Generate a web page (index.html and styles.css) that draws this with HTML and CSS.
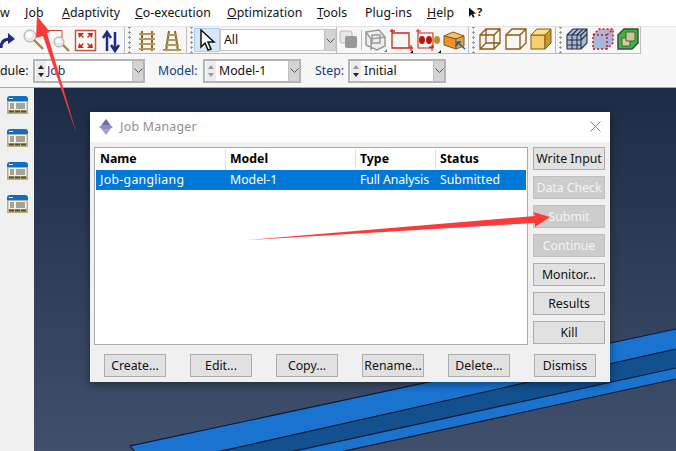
FILE: index.html
```html
<!DOCTYPE html>
<html lang="en">
<head>
<meta charset="utf-8">
<title>Job Manager</title>
<link rel="stylesheet" href="styles.css">
</head>
<body>
<div class="app">
  <nav class="menubar">
    <span class="menu">w</span>
    <span class="menu"><u>J</u>ob</span>
    <span class="menu"><u>A</u>daptivity</span>
    <span class="menu"><u>C</u>o-execution</span>
    <span class="menu"><u>O</u>ptimization</span>
    <span class="menu"><u>T</u>ools</span>
    <span class="menu">Plu<u>g</u>-ins</span>
    <span class="menu"><u>H</u>elp</span>
    <span class="help-icon"><svg width="8" height="14" viewBox="0 0 10 16"><path d="M0 1v12l3-3 2 4 2-1-2-4h4z" fill="#111"/></svg><span class="help-q">?</span></span>
  </nav>

  <div class="toolbar">
    <div class="toolgroup">
      <svg width="20" height="26" viewBox="0 0 20 26"><path d="M1 21c0-6 3-9 9-9" fill="none" stroke="#1f2a80" stroke-width="3"/><path d="M8 6l7 6-7 5z" fill="#1f2a80"/></svg>
      <svg width="26" height="26" viewBox="0 0 26 26"><circle cx="10" cy="9" r="6" fill="#e8e8e8" stroke="#aaa"/><circle cx="9" cy="8" r="3" fill="#fff"/><path d="M14 13l9 9" stroke="#a8843c" stroke-width="2.400"/></svg>
      <svg width="27" height="26" viewBox="0 0 27 26"><path d="M2 6V3.500h14V13" fill="none" stroke="#c8443a"/><circle cx="13" cy="15" r="5" fill="#e8e8e8" stroke="#aaa"/><circle cx="12" cy="14" r="2.500" fill="#fff"/><path d="M17 18l6 6" stroke="#a8843c" stroke-width="2.400"/></svg>
      <svg width="26" height="26" viewBox="0 0 26 26"><rect x="2.500" y="3.500" width="20" height="20" fill="#fff" stroke="#d0533f" stroke-width="1.500"/><path d="M5 6h6l-2 2 2 2-1 1-2-2-2 2zM20 6h-6l2 2-2 2 1 1 2-2 2 2zM5 21h6l-2-2 2-2-1-1-2 2-2-2zM20 21h-6l2-2-2-2 1-1 2 2 2-2z" fill="#c8300f"/></svg>
      <svg width="25" height="26" viewBox="0 0 25 26"><path d="M8 24V7M4 11l4-6 4 6" fill="none" stroke="#1f2a80" stroke-width="2.500"/><path d="M16 5v17M12 18l4 6 4-6" fill="none" stroke="#1f2a80" stroke-width="2.500"/></svg>
    </div>
    <div class="toolgroup grip-group grip-wide">
      <svg width="26" height="26" viewBox="0 0 26 26"><path d="M6 4v20M16 4v20" stroke="#8a6a2c" stroke-width="2"/><path d="M3 7h16M3 12h16M3 17h16M3 22h16" stroke="#b8965a" stroke-width="2"/></svg>
      <svg width="24" height="26" viewBox="0 0 24 26"><path d="M7 4L4 24M13 4l3 20" stroke="#8a6a2c" stroke-width="2"/><path d="M5 8h10M4 13h12M3 18h14M1 23h18" stroke="#b8965a" stroke-width="2"/></svg>
    </div>
    <div class="toolgroup grip-group select-group">
      <span class="pick-btn">
        <svg width="24" height="22" viewBox="0 0 24 22"><path d="M6 1v17l4-4 3 7 3-1-3-7h6z" fill="#fff" stroke="#111" stroke-width="1.500"/></svg>
      </span>
      <span class="combo combo-all"><span class="combo-text">All</span><span class="combo-arrow"><svg width="9" height="5" viewBox="0 0 9 5"><path d="M.5.500l4 4 4-4" fill="none" stroke="#555"/></svg></span></span>
    </div>
    <div class="toolgroup">
      <svg width="24" height="26" viewBox="0 0 24 26"><rect x="3" y="4" width="12" height="12" rx="2" fill="#e8e8e8" stroke="#bbb"/><rect x="8" y="9" width="12" height="12" rx="2" fill="#999"/></svg>
      <span class="vsep"></span>
      <svg width="26" height="26" viewBox="0 0 26 26"><path d="M4 5l13-2 6 7v9l-8 4-11-5z M4 5l5 7 14-2 M9 12v11 M10 8h8v8h-8z" fill="#eee" stroke="#999" stroke-width="1.500"/><path d="M22 25h3v-3z" fill="#777"/></svg>
      <svg width="26" height="26" viewBox="0 0 26 26"><path d="M4 6h17v15H4z M2 4h5M4 2v5M20 21h5M23 18v6" fill="none" stroke="#d02a12" stroke-width="1.300"/><path d="M22 26h3v-3z" fill="#111"/></svg>
      <svg width="28" height="26" viewBox="0 0 28 26"><path d="M4 6h15v15H4zM2 4h5M4 2v5M15 20h5M18 18v6" fill="none" stroke="#d02a12" stroke-width="1.100"/><ellipse cx="8" cy="13" rx="3" ry="4" fill="#b01a10"/><ellipse cx="15" cy="13" rx="3" ry="4" fill="#b01a10"/><ellipse cx="23" cy="13" rx="3" ry="4" fill="#c88a30"/><path d="M24 26h3v-3z" fill="#111"/></svg>
      <svg width="26" height="26" viewBox="0 0 26 26"><path d="M2 9l9-4 11 4-8 3z" fill="#f5c070" stroke="#8a5a20"/><path d="M2 9l12 3v10L2 18z" fill="#f0922a" stroke="#8a5a20"/><path d="M14 12l8-3v10l-8 3z" fill="#e8a038" stroke="#8a5a20"/><path d="M23 22l-8-7m0 0v4m0-4h4" fill="none" stroke="#1560b0" stroke-width="1.600"/></svg>
    </div>
    <div class="toolgroup grip-group cube-group">
      <svg width="26" height="26" viewBox="0 2 26 26"><path d="M3 10h14v14H3zM9 4h14v14H9zM3 10l6-6M17 10l6-6M3 24l6-6M17 24l6-6" fill="none" stroke="#8a5a10" stroke-width="1.300"/></svg>
      <svg width="25" height="26" viewBox="0 2 25 26"><path d="M3 10h14v14H3zM3 10l6-6h14v14l-6 6M17 10l6-6" fill="none" stroke="#8a5a10" stroke-width="1.300"/></svg>
      <svg width="25" height="26" viewBox="0 2 25 26"><path d="M3 10l6-6h14v14l-6 6z" fill="#d8a848"/><rect x="3" y="10" width="14" height="14" fill="#f3d070" stroke="#8a5a10"/><path d="M3 10l6-6h14l-6 6z" fill="#f8e090" stroke="#8a5a10"/><path d="M17 10l6-6v14l-6 6z" fill="#c89838" stroke="#8a5a10"/></svg>
    </div>
    <div class="toolgroup grip-group mesh-group">
      <svg width="25" height="26" viewBox="0 2 25 26"><path d="M3 10l6-6h14v14l-6 6H3z" fill="#a8b8d8"/><path d="M3 10h14v14H3zM3 15h14M3 20h14M8 10v14M13 10v14M3 10l6-6h14v14l-6 6M17 10l6-6M8 10l6-6M13 10l6-6M17 15l6-6" fill="none" stroke="#2a3048" stroke-width="1.100"/></svg>
      <svg width="26" height="26" viewBox="0 2 26 26"><path d="M4 10l6-6h14v14l-6 6H4z" fill="#a8b8d8"/><path d="M4 10h14v14H4zM4 10l6-6h14v14l-6 6M18 10l6-6" fill="none" stroke="#e01020" stroke-width="1.500" stroke-dasharray="2 2"/></svg>
      <svg width="25" height="26" viewBox="0 2 25 26"><path d="M3 10l6-6h14v14l-6 6H3z" fill="#38b838" stroke="#444" stroke-width="1.500"/><path d="M7 13h8v8H7z" fill="#d8d090" stroke="#555"/><path d="M11 7h9v9h-9z" fill="#c8c890" stroke="#555"/></svg>
    </div>
  </div>

  <div class="contextbar">
    <span class="ctx-label ctx-module">dule:</span>
    <span class="combo combo-module"><span class="spin"><i class="up"></i><i class="down"></i></span><span class="combo-text combo-job">Job</span><span class="combo-arrow"><svg width="9" height="5" viewBox="0 0 9 5"><path d="M.5.500l4 4 4-4" fill="none" stroke="#555"/></svg></span></span>
    <span class="ctx-label ctx-model">Model:</span>
    <span class="combo combo-model"><span class="spin spin-off"><i class="up"></i><i class="down"></i></span><span class="combo-text">Model-1</span><span class="combo-arrow"><svg width="9" height="5" viewBox="0 0 9 5"><path d="M.5.500l4 4 4-4" fill="none" stroke="#555"/></svg></span></span>
    <span class="ctx-label ctx-step">Step:</span>
    <span class="combo combo-model"><span class="spin"><i class="up up-off"></i><i class="down"></i></span><span class="combo-text">Initial</span><span class="combo-arrow"><svg width="9" height="5" viewBox="0 0 9 5"><path d="M.5.500l4 4 4-4" fill="none" stroke="#555"/></svg></span></span>
  </div>

  <div class="workspace">
    <aside class="sidestrip">
      <svg width="21" height="18" viewBox="0 0 21 18"><use href="#tree"/></svg>
      <svg width="21" height="18" viewBox="0 0 21 18"><use href="#tree"/></svg>
      <svg width="21" height="18" viewBox="0 0 21 18"><use href="#tree"/></svg>
      <svg width="21" height="18" viewBox="0 0 21 18"><use href="#tree"/></svg>
    </aside>
    <main class="viewport">
      <svg class="model" width="642" height="364" viewBox="34 87 642 364">
        <polygon points="130,445 676,328 676,348 217,451 135,451" fill="#1a73cf"/>
        <polygon points="217,451 676,348 676,367 290,451" fill="#12508f"/>
        <polygon points="290,451 676,367 676,378 340,451" fill="#1a73cf"/>
        <path d="M135,451L130,445L676,328M217,451L676,348M290,451L676,367M340,451L676,378" fill="none" stroke="#0b1a30" stroke-width="1.200"/>
      </svg>
    </main>
  </div>

  <section class="dialog">
    <header class="dialog-title">
      <svg width="16" height="16" viewBox="0 0 16 16"><path d="M8 0l4.500 6h-9z" fill="#6c6ca6"/><path d="M1 8l3-2h8l3 2-3 2H4z" fill="#8c8cc0"/><path d="M8 16l4.500-6h-9z" fill="#a0a0d0"/></svg>
      <span class="title-text">Job Manager</span>
      <svg class="close" width="11" height="11" viewBox="0 0 11 11"><path d="M.5.500l10 10M10.500.500l-10 10" stroke="#808080" fill="none"/></svg>
    </header>
    <div class="dialog-body">
      <div class="dialog-main">
        <div class="table">
          <div class="thead">
            <span class="col col-name">Name</span><span class="col col-model">Model</span><span class="col col-type">Type</span><span class="col col-status">Status</span>
          </div>
          <div class="trow">
            <span class="col col-name cell-wide">Job-gangliang</span><span class="col col-model">Model-1</span><span class="col col-type cell-tight">Full Analysis</span><span class="col col-status">Submitted</span>
          </div>
        </div>
        <div class="side-buttons">
          <button class="btn side-btn">Write Input</button>
          <button class="btn side-btn" disabled>Data Check</button>
          <button class="btn side-btn" disabled>Submit</button>
          <button class="btn side-btn" disabled>Continue</button>
          <button class="btn side-btn">Monitor...</button>
          <button class="btn side-btn">Results</button>
          <button class="btn side-btn">Kill</button>
        </div>
      </div>
      <div class="dialog-foot">
        <button class="btn foot-btn">Create...</button>
        <button class="btn foot-btn">Edit...</button>
        <button class="btn foot-btn">Copy...</button>
        <button class="btn foot-btn">Rename...</button>
        <button class="btn foot-btn">Delete...</button>
        <button class="btn foot-btn">Dismiss</button>
      </div>
    </div>
  </section>

  <svg class="annot" width="676" height="451" viewBox="0 0 676 451">
    <polygon points="37,16 50,32 47,33 77,135 43,36 36,38" fill="#f93a3a"/>
    <polygon points="248,240 535,216 533,212 550,217 535,227 535,223" fill="#fb3a3a"/>
  </svg>
</div>

<svg class="defs" width="0" height="0">
  <symbol id="tree" viewBox="0 0 21 18">
    <rect x="0" y="2" width="21" height="16" fill="#b8ad85"/>
    <path d="M0 3q0-3 3-3h15q3 0 3 3v2H0z" fill="#0f6fc6"/>
    <rect x="2" y="2" width="4" height="1" fill="#fff"/>
    <rect x="1.500" y="6" width="18" height="8" fill="#f3f1e6"/>
    <path d="M3 8h4M3 10h4M3 12h4M9 8h9M9 10h9M9 12h9" stroke="#555"/>
    <path d="M2 15.500h5M8 15.500h5M14 15.500h5" stroke="#5a5030" stroke-width="2"/>
  </symbol>
</svg>
</body>
</html>
```

FILE: styles.css
```css
* { box-sizing: border-box; }
html, body { margin: 0; padding: 0; }
body {
  width: 676px;
  height: 451px;
  overflow: hidden;
  font-family: "Noto Sans", "Liberation Sans", sans-serif;
  font-size: 12.3px;
  color: #111;
  background: #f0f0f0;
}
.app { position: relative; width: 676px; height: 451px; display: flex; flex-direction: column; overflow: hidden; }
.defs { position: absolute; }

.menubar {
  height: 26px;
  flex: none;
  display: grid;
  grid-template-columns: 9px 21px 57px 76px 74px 32px 46px 27px 20px;
  column-gap: 16px;
  align-items: center;
  background: #fff;
}
.menu { line-height: 26px; color: #111; white-space: nowrap; letter-spacing: .05px; }
.help-icon { display: flex; align-items: flex-start; margin-left: -1px; height: 16px; }
.help-icon svg { display: block; margin-top: 1px; }
.help-q { font-size: 11px; font-weight: 700; line-height: 13px; color: #111; }

.toolbar {
  height: 28px;
  flex: none;
  display: flex;
  align-items: center;
  background: #f7f7f7;
  border-top: 1px solid #e4e4e4;
}
.toolgroup {
  display: flex;
  align-items: center;
  height: 100%;
  border-right: 1px solid #bdbdbd;
  border-bottom: 1px solid #bdbdbd;
}
.toolgroup svg { display: block; flex: none; }
.grip-group {
  background-image: radial-gradient(circle, #999 1px, transparent 1.200px);
  background-size: 3px 5px;
  background-repeat: repeat-y;
  background-position: 3px 3px;
}
.grip-wide { padding-left: 11px; }
.select-group { padding-left: 7px; }
.cube-group { padding: 0 2px 0 8px; }
.mesh-group { padding-left: 8px; }
.vsep { width: 1px; height: 20px; background: #bdbdbd; }
.pick-btn {
  width: 26px;
  height: 24px;
  display: flex;
  align-items: center;
  justify-content: center;
  background: #d6e8f8;
  border: 1px solid #a8cdee;
}
.combo {
  display: flex;
  align-items: center;
  background: #fff;
  border: 2px solid #b4b4b4;
  flex: none;
}
.combo-all { width: 116px; height: 22px; border: 1px solid #c8c8c8; }
.combo-module { width: 112px; height: 24px; margin-left: 4px; }
.combo-model { width: 98px; height: 24px; }
.combo-text { flex: 1; padding-left: 3px; line-height: 20px; white-space: nowrap; }
.combo-job { color: #143a78; padding-left: 1px; }
.combo-arrow {
  width: 11px;
  height: 100%;
  display: flex;
  align-items: center;
  justify-content: center;
  background: #d4d4d4;
  border-left: 1px solid #c0c0c0;
}
.spin {
  width: 10px;
  height: 100%;
  margin-left: 1px;
  display: flex;
  flex-direction: column;
  justify-content: space-around;
  align-items: center;
  background: #ececec;
  padding: 2px 0;
}
.spin i { width: 0; height: 0; border-left: 3.5px solid transparent; border-right: 3.5px solid transparent; }
.spin .up { border-bottom: 4px solid #222; }
.spin .down { border-top: 4px solid #222; }
.spin .up-off { border-bottom-color: #999; }
.spin-off .up { border-bottom-color: #999; }
.spin-off .down { border-top-color: #999; }

.contextbar {
  height: 34px;
  flex: none;
  display: flex;
  align-items: center;
  background: #f7f7f7;
  border-bottom: 1px solid #a8a8a8;
}
.ctx-label { color: #143a78; white-space: nowrap; }
.ctx-module { width: 29px; color: #111; }
.ctx-model { margin-left: 13px; width: 46px; margin-right: -1px; }
.ctx-step { margin-left: 14px; width: 33px; }

.workspace { flex: 1; display: flex; min-height: 0; }
.sidestrip {
  width: 34px;
  flex: none;
  background: #f0f0f0;
  display: flex;
  flex-direction: column;
  align-items: flex-start;
  gap: 15px;
  padding: 8px 0 0 7px;
}
.viewport {
  flex: 1;
  position: relative;
  overflow: hidden;
  background: linear-gradient(#1c2c46, #40506c);
}
.model { position: absolute; left: 0; top: 0; display: block; }

.dialog {
  position: absolute;
  left: 90px;
  top: 112px;
  width: 520px;
  height: 270px;
  display: flex;
  flex-direction: column;
  background: #f0f0f0;
  box-shadow: 0 2px 8px rgba(0, 0, 0, .45);
}
.dialog-title {
  height: 30px;
  flex: none;
  display: flex;
  align-items: center;
  gap: 6px;
  padding: 0 9px 1px 8px;
  background: #fff;
}
.title-text { flex: 1; color: #909090; font-size: 12.3px; letter-spacing: .3px; }
.close { flex: none; }
.dialog-body { flex: 1; display: flex; flex-direction: column; padding: 5px 5px 5px 4px; }
.dialog-main { display: flex; gap: 5px; height: 198px; flex: none; }
.table { width: 434px; background: #fff; border: 1px solid #aaa; padding: 1px 1px 0; }
.thead, .trow { display: flex; }
.thead { height: 21px; font-weight: 700; color: #000; line-height: 20px; }
.trow { height: 20px; background: #0078d7; color: #fff; line-height: 20px; }
.col { padding-left: 4px; white-space: nowrap; overflow: hidden; display: block; }
.thead .col { border-right: 1px solid #e2e2e2; }
.col-name { width: 130px; }
.col-model { width: 130px; }
.col-type { width: 80px; }
.col-status { flex: 1; }
.thead .col-status { border-right: 0; }
.cell-wide { letter-spacing: .3px; }
.cell-tight { letter-spacing: -.1px; }
.side-buttons { width: 72px; display: flex; flex-direction: column; gap: 6px; }
.btn {
  height: 23px;
  padding: 0;
  font: inherit;
  color: #111;
  background: #e1e1e1;
  border: 1px solid #adadad;
  white-space: nowrap;
}
.btn:disabled { background: #cccccc; color: #f4f4f4; border-color: #bfbfbf; }
.side-btn { width: 72px; flex: none; }
.dialog-foot { display: flex; justify-content: space-between; padding: 9px 9px 0 10px; }
.foot-btn { width: 62px; }

.annot { position: absolute; left: 0; top: 0; pointer-events: none; }
```
